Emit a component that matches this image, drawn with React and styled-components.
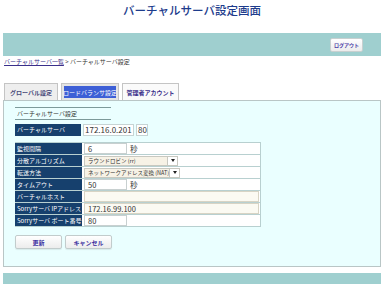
import React from 'react'
import styled, { createGlobalStyle } from 'styled-components'

const Global = createGlobalStyle`
	body {
		margin: 0;
		background: #fff;
		font-family: "Noto Sans CJK JP", "Noto Sans", sans-serif;
		color: #333;
	}
`
const Page = styled.div`
	width: 384px;
	height: 288px;
	padding: 0 3px;
	box-sizing: border-box;
	overflow: hidden;
`
const Title = styled.h1`
	margin: 0;
	height: 33px;
	padding-top: 1px;
	box-sizing: border-box;
	text-align: center;
	font-size: 11.5px;
	font-weight: 500;
	color: #1d3c8c;
	line-height: 18px;
`
const TopBar = styled.div`
	height: 23px;
	background: #9fcfcf;
	display: flex;
	justify-content: flex-end;
	align-items: center;
	padding-right: 18px;
`
const SmallButton = styled.button`
	height: 14px;
	padding: 0 3px;
	font-family: inherit;
	font-size: 5px;
	font-weight: bold;
	color: #4a3aa6;
	background: linear-gradient(#ffffff, #ececec);
	border: 1px solid #c8d0d0;
	border-radius: 2px;
`
const Crumbs = styled.div`
	font-size: 6px;
	line-height: 12px;
	padding-left: 1px;
	color: #333;
	a {
		color: #3a2f8a;
		text-decoration: underline;
	}
`
const Tabs = styled.div`
	display: flex;
	gap: 3px;
	margin-top: 15px;
	padding-left: 1px;
	align-items: flex-end;
`
const Tab = styled.div`
	width: ${p => p.$w}px;
	height: 17px;
	display: flex;
	align-items: center;
	justify-content: center;
	box-sizing: border-box;
	white-space: nowrap;
	font-size: 6px;
	font-weight: ${p => (p.$active ? 'normal' : 'bold')};
	border: 1px solid #c4c4c4;
	border-bottom: none;
	background: ${p => (p.$active ? '#3d5fd6' : p.$light ? '#fafafa' : '#eeeeee')};
	color: ${p => (p.$active ? '#fff' : p.$light ? '#3a2f8a' : '#4a4a7a')};
	box-shadow: ${p => (p.$active ? 'inset 0 0 0 2px #e4e4e4' : 'none')};
`
const Panel = styled.div`
	height: 167px;
	background: #eaffff;
	border: 1px solid #b9c6c6;
	box-sizing: border-box;
	padding: 5px 0 0 11px;
`
const Section = styled.div`
	width: 96px;
	height: 13px;
	border-top: 1px solid #7c9a9a;
	border-bottom: 1px solid #7c9a9a;
	font-size: 6px;
	line-height: 12px;
	padding-left: 2px;
	box-sizing: border-box;
	margin-top: 1px;
`
const VsRow = styled.div`
	display: flex;
	align-items: center;
	gap: 2px;
	margin-top: 4px;
	height: 12px;
`
const Label = styled.div`
	width: 66px;
	height: 100%;
	background: #16406d;
	color: #fff;
	font-size: 6px;
	line-height: 12px;
	padding-left: 2px;
	box-sizing: border-box;
	white-space: nowrap;
	overflow: hidden;
`
const BigInput = styled.div`
	height: 12px;
	width: ${p => p.$w}px;
	background: #fff;
	border: 1px solid #c6d4d4;
	box-sizing: border-box;
	font-size: 8px;
	line-height: 10px;
	padding-left: 1px;
`
const Grid = styled.div`
	width: 246px;
	margin-top: 6px;
	display: grid;
	grid-template-columns: 67px 1fr;
	grid-auto-rows: 12px;
	border-top: 1px solid #b8d0d0;
`
const Cell = styled.div`
	background: #fff;
	border-bottom: 1px solid #b8d0d0;
	border-right: 1px solid #b8d0d0;
	display: flex;
	align-items: center;
	gap: 3px;
	padding-left: 2px;
`
const RowLabel = styled(Label)`
	width: 67px;
	border-bottom: 1px solid #b8d0d0;
	line-height: 11px;
`
const Field = styled.div`
	width: ${p => (p.$w ? `${p.$w}px` : 'auto')};
	flex: ${p => (p.$w ? 'none' : '1')};
	height: 11px;
	border: 1px solid ${p => (p.$full ? '#d8d4c4' : '#c8d0d0')};
	background: ${p => (p.$full ? '#fbfaf2' : '#fff')};
	box-sizing: border-box;
	font-size: 7.5px;
	line-height: 10px;
	padding-left: 3px;
	margin-right: ${p => (p.$full ? '1px' : 0)};
`
const Select = styled.div`
	display: flex;
	height: 10px;
	width: ${p => p.$w}px;
	border: 1px solid #c8c8c0;
	box-sizing: border-box;
	background: #f7f2e6;
	font-size: 5.5px;
	line-height: 8px;
	span {
		flex: 1;
		padding-left: 3px;
		white-space: nowrap;
		overflow: hidden;
	}
`
const Arrow = styled.div`
	width: 9px;
	border-left: 1px solid #c8c8c0;
	background: #fff;
	display: flex;
	align-items: center;
	justify-content: center;
	&::after {
		content: '';
		border-left: 2.5px solid transparent;
		border-right: 2.5px solid transparent;
		border-top: 3px solid #222;
	}
`
const Unit = styled.span`
	font-size: 7.5px;
	color: #333;
`
const Buttons = styled.div`
	display: flex;
	gap: 3px;
	margin-top: 8px;
`
const ActionButton = styled(SmallButton)`
	width: 47px;
	height: 14px;
	font-size: 6px;
	color: #3b2fa0;
	border-color: #c2cccc;
	box-shadow: 0 1px 1px rgba(0, 0, 0, 0.08);
`
const BottomBar = styled.div`
	height: 11px;
	margin-top: 6px;
	background: #9fcfcf;
`

const rows = [
	['監視間隔', 'num', '6', '秒'],
	['分散アルゴリズム', 'sel', 'ラウンドロビン (rr)', 94],
	['転送方法', 'sel', 'ネットワークアドレス変換 (NAT)', 96],
	['タイムアウト', 'num', '50', '秒'],
	['バーチャルホスト', 'full', ''],
	['Sorryサーバ IPアドレス', 'full', '172.16.99.100'],
	['Sorryサーバ ポート番号', 'port', '80'],
]

const App = () => (
	<Page>
		<Global />
		<Title>バーチャルサーバ設定画面</Title>
		<TopBar>
			<SmallButton>ログアウト</SmallButton>
		</TopBar>
		<Crumbs>
			<a href="#">バーチャルサーバ一覧</a> &gt; バーチャルサーバ設定
		</Crumbs>
		<Tabs>
			<Tab $w={54}>グローバル設定</Tab>
			<Tab $w={58} $active>ロードバランサ設定</Tab>
			<Tab $w={57} $light>管理者アカウント</Tab>
		</Tabs>
		<Panel>
			<Section>バーチャルサーバ設定</Section>
			<VsRow>
				<Label>バーチャルサーバ</Label>
				<BigInput $w={51}>172.16.0.201</BigInput>
				<BigInput $w={12}>80</BigInput>
			</VsRow>
			<Grid>
				{rows.map(([label, kind, value, extra]) => (
					<React.Fragment key={label}>
						<RowLabel>{label}</RowLabel>
						<Cell>
							{kind === 'num' && (
								<>
									<Field $w={43}>{value}</Field>
									<Unit>{extra}</Unit>
								</>
							)}
							{kind === 'sel' && (
								<Select $w={extra}>
									<span>{value}</span>
									<Arrow />
								</Select>
							)}
							{kind === 'full' && <Field $full>{value}</Field>}
							{kind === 'port' && <Field $w={43}>{value}</Field>}
						</Cell>
					</React.Fragment>
				))}
			</Grid>
			<Buttons>
				<ActionButton>更新</ActionButton>
				<ActionButton>キャンセル</ActionButton>
			</Buttons>
		</Panel>
		<BottomBar />
	</Page>
)

export default App
